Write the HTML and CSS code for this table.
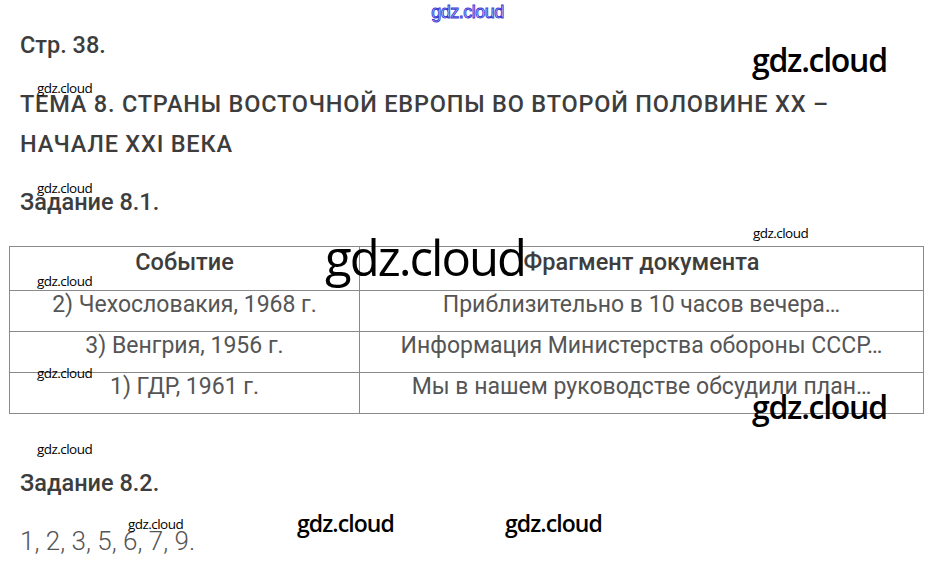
FILE: index.html
```html
<!doctype html>
<html lang="ru">
  <head>
    <meta charset="UTF-8" />
    <title>Стр. 38. Тема 8</title>
    <link rel="stylesheet" href="styles.css">
  </head>
  <body>
    <div class="page">
      <!-- Верхняя ссылка -->
      <div class="top-mark">gdz.cloud</div>

      <p class="title page-num">Стр. 38.</p>
      <p class="title topic">ТЕМА 8. СТРАНЫ ВОСТОЧНОЙ ЕВРОПЫ ВО ВТОРОЙ ПОЛОВИНЕ XX – НАЧАЛЕ XXI ВЕКА</p>

      <p class="title task task-1">Задание 8.1.</p>

      <table class="answer-table">
        <tr>
          <th>Событие</th>
          <th>Фрагмент документа</th>
        </tr>
        <tr>
          <td>2) Чехословакия, 1968 г.</td>
          <td>Приблизительно в 10 часов вечера…</td>
        </tr>
        <tr>
          <td>3) Венгрия, 1956 г.</td>
          <td>Информация Министерства обороны СССР…</td>
        </tr>
        <tr>
          <td>1) ГДР, 1961 г.</td>
          <td>Мы в нашем руководстве обсудили план…</td>
        </tr>
      </table>

      <p class="title task task-2">Задание 8.2.</p>
      <p class="answer">1, 2, 3, 5, 6, 7, 9.</p>

      <!-- Водяные знаки -->
      <span class="wm wm-lg" style="left:752px;top:44px">gdz.cloud</span>
      <span class="wm wm-sm" style="left:37px;top:82px">gdz.cloud</span>
      <span class="wm wm-sm" style="left:37px;top:182px">gdz.cloud</span>
      <span class="wm wm-sm" style="left:753px;top:227px">gdz.cloud</span>
      <span class="wm wm-xl" style="left:325px;top:233px">gdz.cloud</span>
      <span class="wm wm-sm" style="left:37px;top:275px">gdz.cloud</span>
      <span class="wm wm-sm" style="left:37px;top:367px">gdz.cloud</span>
      <span class="wm wm-lg" style="left:752px;top:391px">gdz.cloud</span>
      <span class="wm wm-sm" style="left:37px;top:443px">gdz.cloud</span>
      <span class="wm wm-sm" style="left:128px;top:518px">gdz.cloud</span>
      <span class="wm wm-md" style="left:297px;top:512px">gdz.cloud</span>
      <span class="wm wm-md" style="left:505px;top:512px">gdz.cloud</span>
    </div>
  </body>
</html>
```

FILE: styles.css
```css
/* Base */
body {
  margin: 0;
  background: #fff;
  font-family: Roboto, "Liberation Sans", sans-serif;
  color: #404040;
}

.page {
  position: relative;
  width: 935px;
  height: 570px;
  overflow: hidden;
  padding: 0 0 0 20px;
  box-sizing: border-box;
}

p {
  margin: 0;
}

/* Top link */
.top-mark {
  text-align: center;
  margin-left: -20px;
  height: 25px;
  line-height: 24px;
  font-family: "Liberation Sans", sans-serif;
  font-size: 18px;
  letter-spacing: -0.5px;
  color: #fff;
  -webkit-text-stroke: 1px #3b3bd6;
}

/* Headings */
.title {
  font-size: 23.5px;
  font-weight: 500;
  color: #3d3d3d;
  line-height: 28px;
}

.page-num {
  margin-top: 6px;
}

.topic {
  margin-top: 25px;
  width: 840px;
  line-height: 40px;
  letter-spacing: 0.8px;
}

.task-1 {
  margin-top: 24px;
}

/* Table */
.answer-table {
  margin: 30px 0 0 -11px;
  width: 915px;
  border-collapse: collapse;
  font-size: 23px;
  color: #555;
}

.answer-table th,
.answer-table td {
  border: 1px solid #8a8a8a;
  text-align: center;
  vertical-align: top;
  padding: 0;
  height: 40px;
  line-height: 28px;
}

.answer-table th {
  font-size: 23.5px;
  font-weight: 500;
  color: #3d3d3d;
  height: 42px;
  padding-top: 1px;
}

.answer-table th:first-child,
.answer-table td:first-child {
  width: 349px;
}

.task-2 {
  margin-top: 55px;
}

.answer {
  margin-top: 29px;
  font-size: 26px;
  line-height: 30px;
  font-weight: 300;
  color: #555;
}

/* Watermarks */
.wm {
  position: absolute;
  font-family: "Open Sans", sans-serif;
  color: #000;
  white-space: nowrap;
  letter-spacing: -0.04em;
  line-height: 1;
}

.wm-sm {
  font-size: 13.5px;
}

.wm-md {
  font-size: 23px;
  font-weight: 600;
}

.wm-lg {
  font-size: 32px;
  font-weight: 600;
}

.wm-xl {
  font-size: 49px;
}
```
